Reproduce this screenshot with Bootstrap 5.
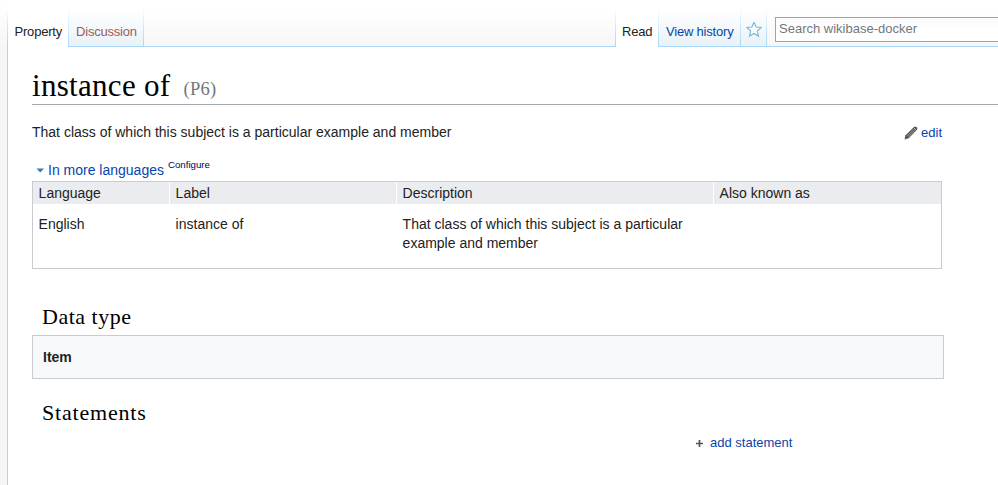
<!DOCTYPE html>
<html lang="en">
<head>
<meta charset="utf-8">
<meta name="viewport" content="width=device-width, initial-scale=1">
<title>instance of</title>
<link href="https://cdn.jsdelivr.net/npm/bootstrap@5.3.0/dist/css/bootstrap.min.css" rel="stylesheet">
<style>
body{font-family:"Liberation Sans",Arial,sans-serif;font-size:14px;line-height:19px;color:#222;background:#fff;height:485px}
a{color:#0645ad;text-decoration:none}
.gutter{width:7px;background:linear-gradient(#fff,#f6f6f6 46px)}
.page-col{min-width:0}
.tabbar{height:47px;background:linear-gradient(#fff 0,#fff 10px,#f6f6f6 100%)}
.tab-item{height:47px;padding-top:22px;font-size:13px;letter-spacing:-.2px;border-right:1px solid;border-bottom:1px solid;border-image:linear-gradient(rgba(167,215,249,0) 8px,#a7d7f9 46px) 1;background:linear-gradient(#fff 10px,#e8f2f8)}
.tab-item.on{background:#fff;border-bottom:0;color:#222}
.tab-label{display:block;white-space:nowrap}
.filler{border-bottom:1px solid #a7d7f9}
.edge{width:1px;background:linear-gradient(rgba(167,215,249,0) 8px,#a7d7f9 46px)}
.search-area{padding:17px 0 0 8px}
.search-box{height:25px;border:1px solid #a2a2a2;border-right:0;padding:0 0 2px 3px;font-size:13px;border-radius:0;background:linear-gradient(#f9f9f9,#fff 12px);min-height:0;line-height:21px}
.search-box::placeholder{color:#72777d;opacity:1}
.search-box:focus{box-shadow:none;border-color:#36c}
.main-panel{border-left:1px solid #a7d7f9}
.main-pad{padding:24px 0 0 24px}
.serif{font-family:"Liberation Serif",Georgia,serif;font-weight:400;color:#000}
.page-title{font-size:31px;line-height:30px;height:34px;border-bottom:1px solid #a2a9b1;letter-spacing:.3px}
.entity-id{font-size:18.5px;color:#72777d;margin-left:13px;vertical-align:1px}
.content-col{width:910px}
.desc-row{padding-top:18px}
.edit-link{font-size:13px}
.pencil{margin-right:3px}
.more-row{padding:19px 0 0 4px;height:39px}
.caret-down{margin-top:7px}
.configure{font-size:9.7px;line-height:12px;color:#000060;margin:-2px 0 0 4px}
.terms{border:1px solid #c8ccd1;height:88px;display:grid;grid-template-columns:137px 227px 317px 1fr;grid-template-rows:22px 1fr}
.terms-head{background:#eaecf0;border-right:1px solid #fff;padding:2px 0 0 5.6px}
.terms-head:nth-child(4){border-right:0}
.terms-cell{padding:11px 5px 0 5.6px}
.section-title{font-size:22px;line-height:26px;padding-left:10px;letter-spacing:.5px}
.statements-title{letter-spacing:.8px}
.datatype{width:912px;height:44px;background:#f8f9fb;border:1px solid #c8ccd1;padding:12px 10px}
.add-link{font-size:13px;margin-left:664px}
.plus{margin:2px 7px 0 0}
</style>
<script src="https://cdn.jsdelivr.net/npm/bootstrap@5.3.0/dist/js/bootstrap.bundle.min.js"></script>
</head>
<body class="d-flex overflow-hidden m-0">
<div class="gutter flex-shrink-0"></div>
<div class="page-col flex-grow-1 d-flex flex-column">
  <nav class="tabbar d-flex flex-shrink-0">
    <div class="edge"></div>
    <div class="tab-item on" style="width:61px"><span class="tab-label" style="padding-left:6.5px">Property</span></div>
    <div class="tab-item" style="width:75px"><a href="#" class="tab-label" style="color:#a55858;padding-left:7px">Discussion</a></div>
    <div class="filler" style="width:471px"></div>
    <div class="edge"></div>
    <div class="tab-item on" style="width:43px"><span class="tab-label" style="padding-left:6px">Read</span></div>
    <div class="tab-item" style="width:82px"><a href="#" class="tab-label" style="padding-left:7px">View history</a></div>
    <div class="tab-item" style="width:26px"><a href="#" class="tab-label" aria-label="Watch"><svg class="d-block mx-auto" width="16" height="16" viewBox="0 0 16 16"><path d="M8 .9l2.1 4.8 5.1.5-3.9 3.5 1.2 5.1L8 12.2l-4.5 2.6 1.2-5.1L.8 6.2l5.1-.5z" fill="#fff" fill-opacity=".7" stroke="#7cb5d1" stroke-width="1.1" transform="translate(0 -.7)"/></svg></a></div>
    <form class="filler search-area flex-grow-1"><input class="form-control search-box" type="search" placeholder="Search wikibase-docker" aria-label="Search"></form>
  </nav>
  <main class="main-panel main-pad flex-grow-1">
    <h1 class="serif page-title m-0">instance of<span class="entity-id">(P6)</span></h1>
    <div class="content-col">
      <div class="desc-row d-flex justify-content-between">
        <span>That class of which this subject is a particular example and member</span>
        <a href="#" class="edit-link d-flex align-items-center"><svg class="pencil" width="14" height="14" viewBox="0 0 14 14"><path d="M.5 13.6l1-4.3L10 1q1.2-1 2.6.2t.4 2.6L4.7 12.2z" fill="#555"/><path d="M3 10.2L10 3.2M4.4 11L11 4.3" stroke="#aaa" stroke-width=".8"/><path d="M10 2l2 2" stroke="#ccc" stroke-width=".8"/></svg>edit</a>
      </div>
      <div class="more-row d-flex">
        <svg class="caret-down" width="8" height="5" viewBox="0 0 8 5"><path d="M.5 .5h7.5L4.2 4.5z" fill="#347bb7"/></svg>
        <a href="#" class="ms-1">In more languages</a><a href="#" class="configure">Configure</a>
      </div>
      <div class="terms">
        <div class="terms-head">Language</div><div class="terms-head">Label</div><div class="terms-head">Description</div><div class="terms-head">Also known as</div>
        <div class="terms-cell">English</div><div class="terms-cell">instance of</div><div class="terms-cell">That class of which this subject is a particular example and member</div><div class="terms-cell"></div>
      </div>
    </div>
    <h2 class="serif section-title mb-0" style="margin-top:35px">Data type</h2>
    <div class="datatype fw-bold" style="margin-top:5px">Item</div>
    <h2 class="serif section-title statements-title mb-0" style="margin-top:21px">Statements</h2>
    <a href="#" class="add-link d-inline-flex align-items-center" style="margin-top:7px"><svg class="plus" width="7" height="7" viewBox="0 0 7 7"><path d="M3.5 0v7M0 3.5h7" stroke="#555" stroke-width="1.7"/></svg>add statement</a>
  </main>
</div>
</body>
</html>
